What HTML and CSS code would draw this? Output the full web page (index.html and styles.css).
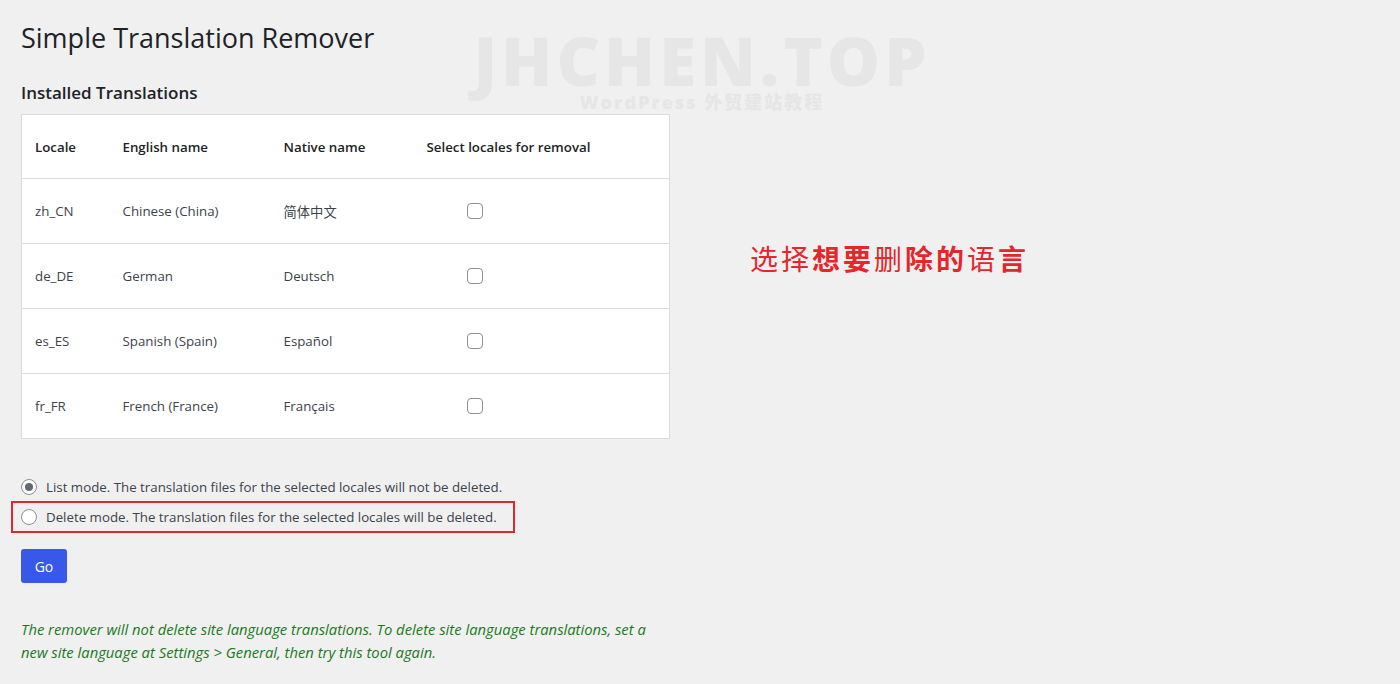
FILE: index.html
```html
<!DOCTYPE html>
<html lang="en">
<head>
    <meta charset="UTF-8">
    <meta name="viewport" content="width=device-width, initial-scale=1.0">
    <title>Simple Translation Remover</title>
    <link rel="stylesheet" href="styles.css">
</head>
<body>

    <div class="watermark">
        <div class="wm-big">JHCHEN.TOP</div>
        <div class="wm-small">WordPress 外贸建站教程</div>
    </div>

    <div class="wrap">
        <div class="main">
            <h1>Simple Translation Remover</h1>

            <h2>Installed Translations</h2>
            <table class="locales">
                <thead>
                    <tr>
                        <th class="col-locale">Locale</th>
                        <th class="col-english">English name</th>
                        <th class="col-native">Native name</th>
                        <th class="col-select">Select locales for removal</th>
                    </tr>
                </thead>
                <tbody>
                    <tr>
                        <td>zh_CN</td>
                        <td>Chinese (China)</td>
                        <td>简体中文</td>
                        <td class="check"><input type="checkbox" name="locales[]" value="zh_CN"></td>
                    </tr>
                    <tr>
                        <td>de_DE</td>
                        <td>German</td>
                        <td>Deutsch</td>
                        <td class="check"><input type="checkbox" name="locales[]" value="de_DE"></td>
                    </tr>
                    <tr>
                        <td>es_ES</td>
                        <td>Spanish (Spain)</td>
                        <td>Español</td>
                        <td class="check"><input type="checkbox" name="locales[]" value="es_ES"></td>
                    </tr>
                    <tr>
                        <td>fr_FR</td>
                        <td>French (France)</td>
                        <td>Français</td>
                        <td class="check"><input type="checkbox" name="locales[]" value="fr_FR"></td>
                    </tr>
                </tbody>
            </table>

            <div class="modes">
                <label class="mode">
                    <input type="radio" name="mode" value="list" checked>
                    List mode. The translation files for the selected locales will not be deleted.
                </label>
                <label class="mode highlight">
                    <input type="radio" name="mode" value="delete">
                    Delete mode. The translation files for the selected locales will be deleted.
                </label>
            </div>

            <button class="go-btn">Go</button>

            <p class="notice">The remover will not delete site language translations. To delete site language translations, set a new site language at Settings &gt; General, then try this tool again.</p>
        </div>

        <div class="note">
            <p>选择<b>想要</b>删<b>除的</b>语<b>言</b></p>
        </div>
    </div>

</body>
</html>
```

FILE: styles.css
```css
* {
    margin: 0;
    padding: 0;
    box-sizing: border-box;
}

body {
    background-color: #f0f0f1;
    color: #3c434a;
    font-family: "Open Sans", "Noto Sans", "Noto Sans CJK SC", sans-serif;
    font-size: 13.3px;
    height: 684px;
    overflow: hidden;
    position: relative;
}

/* faint site watermark behind the page */
.watermark {
    position: absolute;
    left: 462px;
    top: 29px;
    width: 480px;
    text-align: center;
    color: #e6e6e6;
    font-family: "Open Sans", "Noto Sans CJK SC", sans-serif;
    font-weight: 800;
    pointer-events: none;
}

.wm-big {
    font-size: 67px;
    line-height: 62px;
    letter-spacing: 4px;
}

.wm-small {
    font-size: 18px;
    line-height: 22px;
    letter-spacing: 2px;
}

.wrap {
    display: flex;
    padding: 0 21px;
    position: relative;
}

.main {
    width: 649px;
}

h1 {
    font-size: 27px;
    font-weight: 400;
    color: #1d2327;
    line-height: 36px;
    margin-top: 20px;
}

h2 {
    font-size: 17px;
    font-weight: 600;
    color: #1d2327;
    line-height: 24px;
    margin-top: 25px;
    margin-bottom: 9px;
}

.locales {
    width: 649px;
    border: 1px solid #dcdcde;
    border-collapse: collapse;
    background: #fff;
}

.locales th,
.locales td {
    height: 65px;
    text-align: left;
    padding: 0 0 0 13px;
    border-bottom: 1px solid #dcdcde;
    vertical-align: middle;
}

.locales th {
    font-weight: 600;
    color: #1d2327;
    height: 64px;
}

.col-locale { width: 88px; }
.col-english { width: 161px; }
.col-native { width: 143px; }

.locales td.check {
    padding-left: 53px;
}

.check input {
    appearance: none;
    width: 16px;
    height: 16px;
    border: 1px solid #8c8f94;
    border-radius: 4px;
    background: #fff;
    display: block;
}

.modes {
    margin-top: 38px;
    display: flex;
    flex-direction: column;
    gap: 9px;
}

.mode {
    display: flex;
    align-items: center;
    gap: 9px;
    height: 20px;
}

.mode.highlight {
    outline: 2px solid #e0262f;
    margin-left: -8px;
    padding-left: 8px;
    width: 500px;
    height: 28px;
    margin-top: -3px;
}

.mode input {
    appearance: none;
    width: 16px;
    height: 16px;
    border: 1px solid #8c8f94;
    border-radius: 50%;
    background: #fff;
    flex-shrink: 0;
    position: relative;
}

.mode input:checked::before {
    content: "";
    position: absolute;
    left: 3px;
    top: 3px;
    width: 8px;
    height: 8px;
    border-radius: 50%;
    background: #646970;
}

.go-btn {
    margin-top: 18px;
    width: 46px;
    height: 34px;
    border: none;
    border-radius: 3px;
    background: #3858e9;
    color: #fff;
    font-family: inherit;
    font-size: 14px;
}

.notice {
    margin-top: 35px;
    color: #1a7a1a;
    font-style: italic;
    font-size: 14.8px;
    line-height: 23px;
    width: 645px;
}

.note {
    padding-left: 80px;
    padding-top: 238px;
}

.note p {
    color: #e5262b;
    font-family: "Noto Sans CJK SC", sans-serif;
    font-size: 28px;
    letter-spacing: 3px;
    font-weight: 400;
}

.note b {
    font-weight: 700;
}
```
